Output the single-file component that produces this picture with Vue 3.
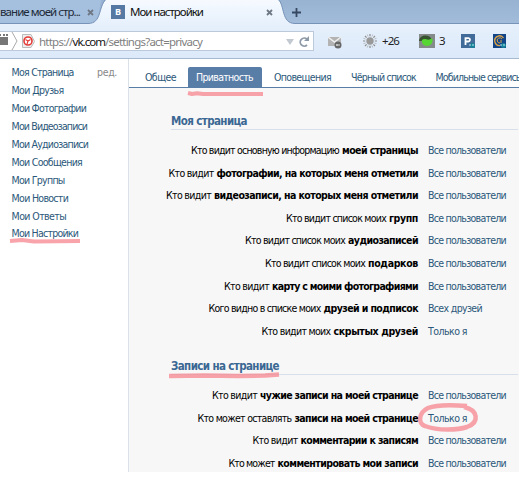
<script setup>
// Sets tracking so a label occupies the given width in pixels.
const vFit = {
  mounted(el, { value }) {
    if (!value) return
    const natural = el.getBoundingClientRect().width
    el.style.letterSpacing = (value - natural) / el.textContent.length + 'px'
  }
}

const menu = [
  ['Моя Страница', 62],
  ['Мои Друзья', 52],
  ['Мои Фотографии', 74.5],
  ['Мои Видеозаписи', 75.5],
  ['Мои Аудиозаписи', 76.5],
  ['Мои Сообщения', 70.5],
  ['Мои Группы', 53],
  ['Мои Новости', 56.5],
  ['Мои Ответы', 54.5],
  ['Мои Настройки', 66.5]
]

const all = ['Все пользователи', 78]
const me = ['Только я', 39]
const sections = [
  {
    title: 'Моя страница',
    width: 76,
    rows: [
      ['Кто видит основную информацию', 148, 'моей страницы', 76, all],
      ['Кто видит', 45, 'фотографии, на которых меня отметили', 201.5, all],
      ['Кто видит', 45, 'видеозаписи, на которых меня отметили', 204, all],
      ['Кто видит список моих', 100, 'групп', 29, all],
      ['Кто видит список моих', 100, 'аудиозаписей', 70, all],
      ['Кто видит список моих', 100, 'подарков', 50, all],
      ['Кто видит', 45, 'карту с моими фотографиями', 146, all],
      ['Кого видно в списке моих', 112, 'друзей и подписок', 94.5, ['Всех друзей', 54]],
      ['Кто видит моих', 69, 'скрытых друзей', 84.5, me]
    ]
  },
  {
    title: 'Записи на странице',
    width: 108,
    rows: [
      ['Кто видит', 45, 'чужие записи на моей странице', 158, all],
      ['Кто может оставлять', 94, 'записи на моей странице', 123.5, me],
      ['Кто видит', 45, 'комментарии к записям', 117.5, all],
      ['Кто может', 46, 'комментировать мои записи', 140.5, all]
    ]
  }
]
</script>

<template>
  <div class="window">
    <div class="strip">
      <svg class="shape" width="519" height="25" viewBox="0 0 519 25">
        <defs>
          <linearGradient id="back" x1="0" y1="0" x2="0" y2="1">
            <stop offset="0" stop-color="#98b3d2" /><stop offset="1" stop-color="#a2bcda" />
          </linearGradient>
          <linearGradient id="front" x1="0" y1="0" x2="0" y2="1">
            <stop offset="0" stop-color="#f6faff" /><stop offset="1" stop-color="#e6f0fc" />
          </linearGradient>
        </defs>
        <rect width="519" height="25" fill="url(#back)" />
        <path d="M0 0H101C99 11 99 23 88 23H0Z" fill="#a5bfde" />
        <path d="M0 23.5H88C102 23.5 98 7 106 0H278C285 5 281 23.5 295 23.5H519V25H0Z" fill="url(#front)" />
        <path d="M0 23.5H88C102 23.5 98 7 106 -1M278 -1C285 5 281 23.5 295 23.5H519" fill="none" stroke="#7793b8" />
      </svg>
      <span class="tab-old"><span v-fit="80">вание моей стр...</span></span>
      <svg class="close c1" width="7" height="7" viewBox="0 0 7 7"><path d="M1 1L6 6M6 1L1 6" /></svg>
      <span class="vk">B</span>
      <span class="tab-title"><span v-fit="73">Мои настройки</span></span>
      <svg class="close c2" width="7" height="7" viewBox="0 0 7 7"><path d="M1 1L6 6M6 1L1 6" /></svg>
      <svg class="plus" width="9" height="9" viewBox="0 0 9 9"><path d="M4.5 0V9M0 4.5H9" stroke="#374962" stroke-width="1.8" /></svg>
    </div>

    <div class="toolbar">
      <div class="address">
        <svg width="36" height="18" viewBox="0 0 36 18">
          <path d="M0 5H8V13H0Z" fill="#777" /><path d="M0 3H1M3 3H5M6 3H8" stroke="#777" stroke-width="2" />
          <path d="M12 0L17 9L12 18" fill="none" stroke="#aaa" />
          <path d="M22.500 2.500H31L34.500 9.500L31 15.500H22.500Z" fill="#eee" stroke="#bbb" />
          <circle cx="28" cy="9" r="4" fill="#fff" stroke="#e33b35" stroke-width="1.600" />
          <path d="M25.500 7.500L28 9L30.500 7.500M28 9L27 12" fill="none" stroke="#e33b35" stroke-width="1.100" />
        </svg>
        <span class="url"><span v-fit="33.500">https://</span><span class="host" v-fit="32.500">vk.com</span><span v-fit="97">/settings?act=privacy</span></span>
        <svg class="reload" width="26" height="12" viewBox="0 0 26 12">
          <path d="M1 3H9L5 9Z" fill="#c3c9d0" />
          <path d="M22 3.200A4 4 0 1 0 22 9" fill="none" stroke="#8c99a8" stroke-width="1.800" />
          <path d="M19 5H24V0Z" fill="#8c99a8" />
        </svg>
      </div>
      <div class="tools">
        <svg class="mail" width="14" height="13" viewBox="0 0 14 13">
          <path d="M0 1H13V10H0Z" fill="#b3b3b3" /><path d="M0 1L6.500 6L13 1" fill="none" stroke="#eee" stroke-width="1.500" />
          <circle cx="10" cy="9" r="3.500" fill="#666" /><circle cx="9" cy="9" r="1" fill="#ddd" /><path d="M10 9H12" stroke="#ddd" />
        </svg>
        <svg class="sun" width="14" height="14" viewBox="0 0 14 14">
          <circle cx="7" cy="7" r="3.700" fill="#999" />
          <path d="M7 0V2.200M7 11.800V14M0 7H2.200M11.800 7H14M2 2L3.600 3.600M10.400 10.400L12 12M12 2L10.400 3.600M3.600 10.400L2 12" stroke="#8c8c8c" stroke-width="1.200" />
          <path d="M4.300 .5L5 2.500M9 11.500L9.700 13.500M9.700 .5L9 2.500M5 11.500L4.300 13.500M.5 4.300L2.500 5M11.500 9L13.500 9.700M.5 9.700L2.500 9M11.500 5L13.500 4.300" stroke="#999" stroke-width=".6" />
        </svg>
        <span class="temp" v-fit="17">+26</span>
        <svg class="green" width="16" height="14" viewBox="0 0 16 14">
          <rect width="16" height="14" fill="#858b8b" />
          <path d="M0 7C1 0 11 0 13 6L10 7H3Z" fill="#36532f" />
          <path d="M3 6C6 3 9 8 13 4C15 9 11 12 8 12C5 12 2 9 3 6Z" fill="#56d634" />
        </svg>
        <span class="three">3</span>
        <svg class="rbadge" width="14" height="14" viewBox="0 0 14 14">
          <rect width="14" height="14" fill="#416b98" /><path d="M4.500 11V4.200H7.500Q9 4.200 9 5.800T7.500 7.500H5" fill="none" stroke="#fff" stroke-width="1.800" />
          <circle cx="11.500" cy="11.500" r="2.500" fill="#168399" /><path d="M8 11H10M11 11H13" stroke="#b9e6ed" />
        </svg>
        <svg class="cbadge" width="13" height="14" viewBox="0 0 13 14">
          <rect width="13" height="14" fill="#124588" /><path d="M10.500 4A4.800 4.800 0 1 0 7 11.500" fill="none" stroke="#dda348" stroke-width="1.300" />
          <path d="M9 5A2.600 2.600 0 1 0 7 9M8 6V9" fill="none" stroke="#dda348" />
          <circle cx="10.500" cy="11.500" r="2.500" fill="#168399" /><path d="M7 11H9M10 11H12" stroke="#b9e6ed" />
        </svg>
      </div>
    </div>

    <div class="page">
      <nav class="side">
        <div v-for="(m, i) in menu" :key="m[0]" class="item">
          <span v-fit="m[1]">{{ m[0] }}</span>
          <span v-if="i === 0" class="edit" v-fit="20">ред.</span>
        </div>
      </nav>
      <main>
        <div class="tabs">
          <span class="t1"><span v-fit="31">Общее</span></span>
          <span class="active"><span v-fit="57">Приватность</span></span>
          <span class="t3"><span v-fit="57">Оповещения</span></span>
          <span class="t4"><span v-fit="65">Чёрный список</span></span>
          <span class="t5"><span v-fit="87">Мобильные сервисы</span></span>
        </div>
        <div class="body">
          <section v-for="s in sections" :key="s.title">
            <h2><span v-fit="s.width">{{ s.title }}</span></h2>
            <div v-for="r in s.rows" :key="r[2]" class="row">
              <div class="label"><span v-fit="r[1]">{{ r[0] }}</span><b v-fit="r[3]">{{ r[2] }}</b></div>
              <div class="value"><span v-fit="r[4][1]">{{ r[4][0] }}</span></div>
            </div>
          </section>
        </div>
      </main>
    </div>

    <svg class="marks" width="519" height="477" viewBox="0 0 519 477">
      <g fill="none" stroke="#f5868d" stroke-opacity=".75" stroke-linecap="butt" stroke-linejoin="round">
        <path d="M188 93L192 94L197 93.300L203 94H263" stroke-width="4" />
        <path d="M10 241L22 240L34 241.500L80 241" stroke-width="4" />
        <path d="M169 376L205 375.500L238 376L265 375.500L279 374.500" stroke-width="4.500" />
        <path d="M467 406C455 405 438 404 428 408C418 413 418 424 425 426C438 431 458 430 467 427C480 422 478 410 464 407" stroke-width="4.500" />
      </g>
    </svg>
  </div>
</template>

<style>
body { background: #fff; overflow: hidden; }
</style>

<style scoped>
.window { position: relative; width: 519px; height: 477px; overflow: hidden; font: 10.5px/18px "DejaVu Sans Condensed", "DejaVu Sans", sans-serif; font-stretch: condensed; white-space: nowrap; color: #2b587a; background: #fff; }
.strip { position: relative; display: flex; height: 25px; font: 11.5px/24px "Noto Sans", sans-serif; color: #111; }
.strip > * { position: relative; flex: none; }
.strip .shape { position: absolute; left: 0; top: 0; }
.tab-old { width: 87px; color: #202a38; }
.close { margin-top: 9px; }
.close path { stroke: #6e7885; stroke-width: 1.8; }
.vk { width: 14px; height: 14px; margin: 5px 5px 0 17px; background: #5579a3; color: #fff; font: bold 9px/14px "Open Sans", sans-serif; text-align: center; }
.c2 { margin-left: auto; margin-right: 19px; }
.plus { margin: 8px 218px 0 0; }
.toolbar { box-sizing: border-box; display: flex; height: 34px; padding-top: 6px; border-bottom: 1px solid #a6b9d1; background: linear-gradient(#e6f0fc, #dce9f9); font: 11.5px/20px "Noto Sans", sans-serif; }
.address { box-sizing: border-box; display: flex; flex: none; width: 314px; height: 20px; border: 1px solid #bbc9db; border-left: 0; background: #fff; }
.url { margin-left: 3px; color: #808080; line-height: 20px; }
.host { color: #111; }
.reload { margin: 4px 2px 0 auto; }
.tools { display: flex; color: #222; }
.tools > * { flex: none; }
.mail { margin: 5px 0 0 14px; }
.sun { margin: 3px 5px 0 21px; }
.green { margin: 3px 4px 0 20px; }
.three { width: 7px; }
.rbadge { margin: 3px 0 0 15px; }
.cbadge { margin: 3px 0 0 18px; }
.page { display: flex; height: 413px; }
.side { box-sizing: border-box; flex: none; width: 129px; padding: 3px 11px 0 11.6px; border-right: 1px solid #dae1e8; }
.item { display: flex; justify-content: space-between; height: 17.95px; line-height: 20px; }
.edit { color: #888; }
main { width: 390px; display: flex; flex-direction: column; }
.tabs { box-sizing: border-box; flex: none; height: 29px; display: flex; align-items: flex-end; border-bottom: 1px solid #587da7; overflow: hidden; line-height: 20px; }
.tabs > span { flex: none; height: 20px; }
.t1 { width: 43px; padding-left: 16px; }
.active { box-sizing: border-box; width: 74px; padding-left: 8px; background: #587da7; color: #fff; border-radius: 2px 2px 0 0; }
.t3 { width: 77px; padding-left: 12px; }
.t4 { width: 84.5px; }
.body { flex: 1; min-height: 0; overflow: hidden; background: #f7f7f7; padding: 24px 1px 0 42px; }
section { margin-bottom: 14.6px; }
h2 { box-sizing: border-box; height: 18px; margin: 0 0 9px; border-bottom: 1px solid #d7dfea; font: bold 11.5px/18px "DejaVu Sans Condensed", "DejaVu Sans", sans-serif; font-stretch: condensed; color: #3b6793; }
.row { display: flex; height: 22.6px; line-height: 22px; }
.label { width: 247px; display: flex; justify-content: flex-end; gap: 3px; color: #000; }
.value { margin-left: 10px; }
.marks { position: absolute; left: 0; top: 0; pointer-events: none; }
</style>
